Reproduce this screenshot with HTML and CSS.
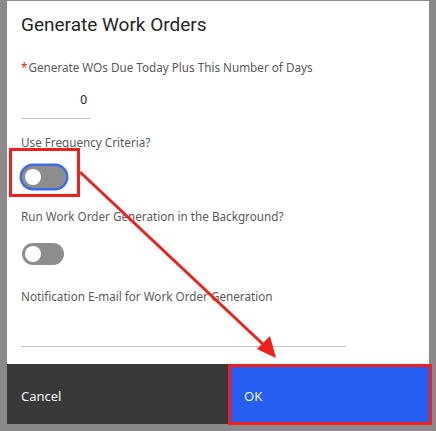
FILE: index.html
```html
<!DOCTYPE html>
<html>
<head>
<meta charset="utf-8">
<link rel="stylesheet" href="styles.css">
</head>
<body>
<div class="backdrop">
  <div class="dialog">
    <div class="body">
      <h1 class="title">Generate Work Orders</h1>
      <div class="field">
        <div class="label"><span class="req">*</span>Generate WOs Due Today Plus This Number of Days</div>
        <div class="num-input"><span>0</span></div>
      </div>
      <div class="field">
        <div class="label">Use Frequency Criteria?</div>
        <div class="toggle focused"><span class="knob"></span></div>
      </div>
      <div class="field">
        <div class="label">Run Work Order Generation in the Background?</div>
        <div class="toggle"><span class="knob"></span></div>
      </div>
      <div class="field">
        <div class="label">Notification E-mail for Work Order Generation</div>
        <div class="text-input"></div>
      </div>
    </div>
    <div class="footer">
      <div class="btn cancel">Cancel</div>
      <div class="btn ok">OK</div>
    </div>
  </div>
  <div class="hl hl-toggle"></div>
  <div class="hl hl-ok"></div>
  <svg class="arrow" width="436" height="431" viewBox="0 0 436 431">
    <line x1="80" y1="172" x2="266" y2="347" stroke="#f0201c" stroke-width="3"/>
    <polygon points="276,358 257,349 270,336" fill="#f0201c"/>
  </svg>
</div>
</body>
</html>
```
FILE: styles.css
```css
* { box-sizing: border-box; }
html, body { margin: 0; padding: 0; }
body {
  width: 436px;
  height: 431px;
  overflow: hidden;
  background: #8a8a8a;
  font-family: "Noto Sans", "Open Sans", sans-serif;
}
.backdrop {
  position: relative;
  width: 436px;
  height: 431px;
  padding: 1px 7px 0 7px;
}
.dialog {
  width: 422px;
  background: #ffffff;
  display: flex;
  flex-direction: column;
}
.body {
  padding: 10px 14px 0 14px;
  height: 363px;
}
.title {
  margin: 0;
  font-family: Roboto, "Noto Sans", sans-serif;
  font-size: 19px;
  font-weight: 400;
  color: #262626;
  line-height: 28px;
}
.field { display: flex; flex-direction: column; }
.label {
  font-size: 11.7px;
  color: #5a5a5a;
  line-height: 16px;
}
.field:nth-of-type(1) { margin-top: 20px; }
.req { color: #da1e28; margin-right: 1px; }
.num-input {
  margin-top: 16px;
  width: 70px;
  height: 28px;
  border-bottom: 1px solid #c6c6c6;
  display: flex;
  justify-content: flex-end;
  padding-right: 4px;
  font-size: 12px;
  color: #222;
}
.field:nth-of-type(2) { margin-top: 15px; }
.field:nth-of-type(3) { margin-top: 20px; }
.field:nth-of-type(4) { margin-top: 23px; }
.toggle {
  margin-top: 19px;
  width: 42px;
  height: 22px;
  border-radius: 11px;
  background: #8d8d8d;
  position: relative;
  margin-left: 1px;
}
.toggle.focused {
  box-shadow: 0 0 0 2.5px #3e6ce0;
  width: 44px;
  margin-top: 16px;
}
.knob {
  position: absolute;
  left: 3px;
  top: 3px;
  width: 16px;
  height: 16px;
  border-radius: 50%;
  background: #ffffff;
}
.text-input {
  margin-top: 42px;
  width: 325px;
  height: 1px;
  border-bottom: 1px solid #c6c6c6;
}
.footer {
  display: flex;
  height: 60px;
}
.btn {
  font-size: 13px;
  color: #f4f4f4;
  padding: 23px 14px 0 14px;
}
.cancel { background: #393939; width: 221px; flex: none; }
.ok { background: #255ef0; padding-left: 16px; flex: 1; }
.hl {
  position: absolute;
  border: 3px solid #f41e1c;
}
.hl-toggle { left: 9px; top: 148px; width: 71px; height: 49px; }
.hl-ok { left: 228px; top: 364px; width: 204px; height: 61px; }
.arrow { position: absolute; left: 0; top: 0; }
```
